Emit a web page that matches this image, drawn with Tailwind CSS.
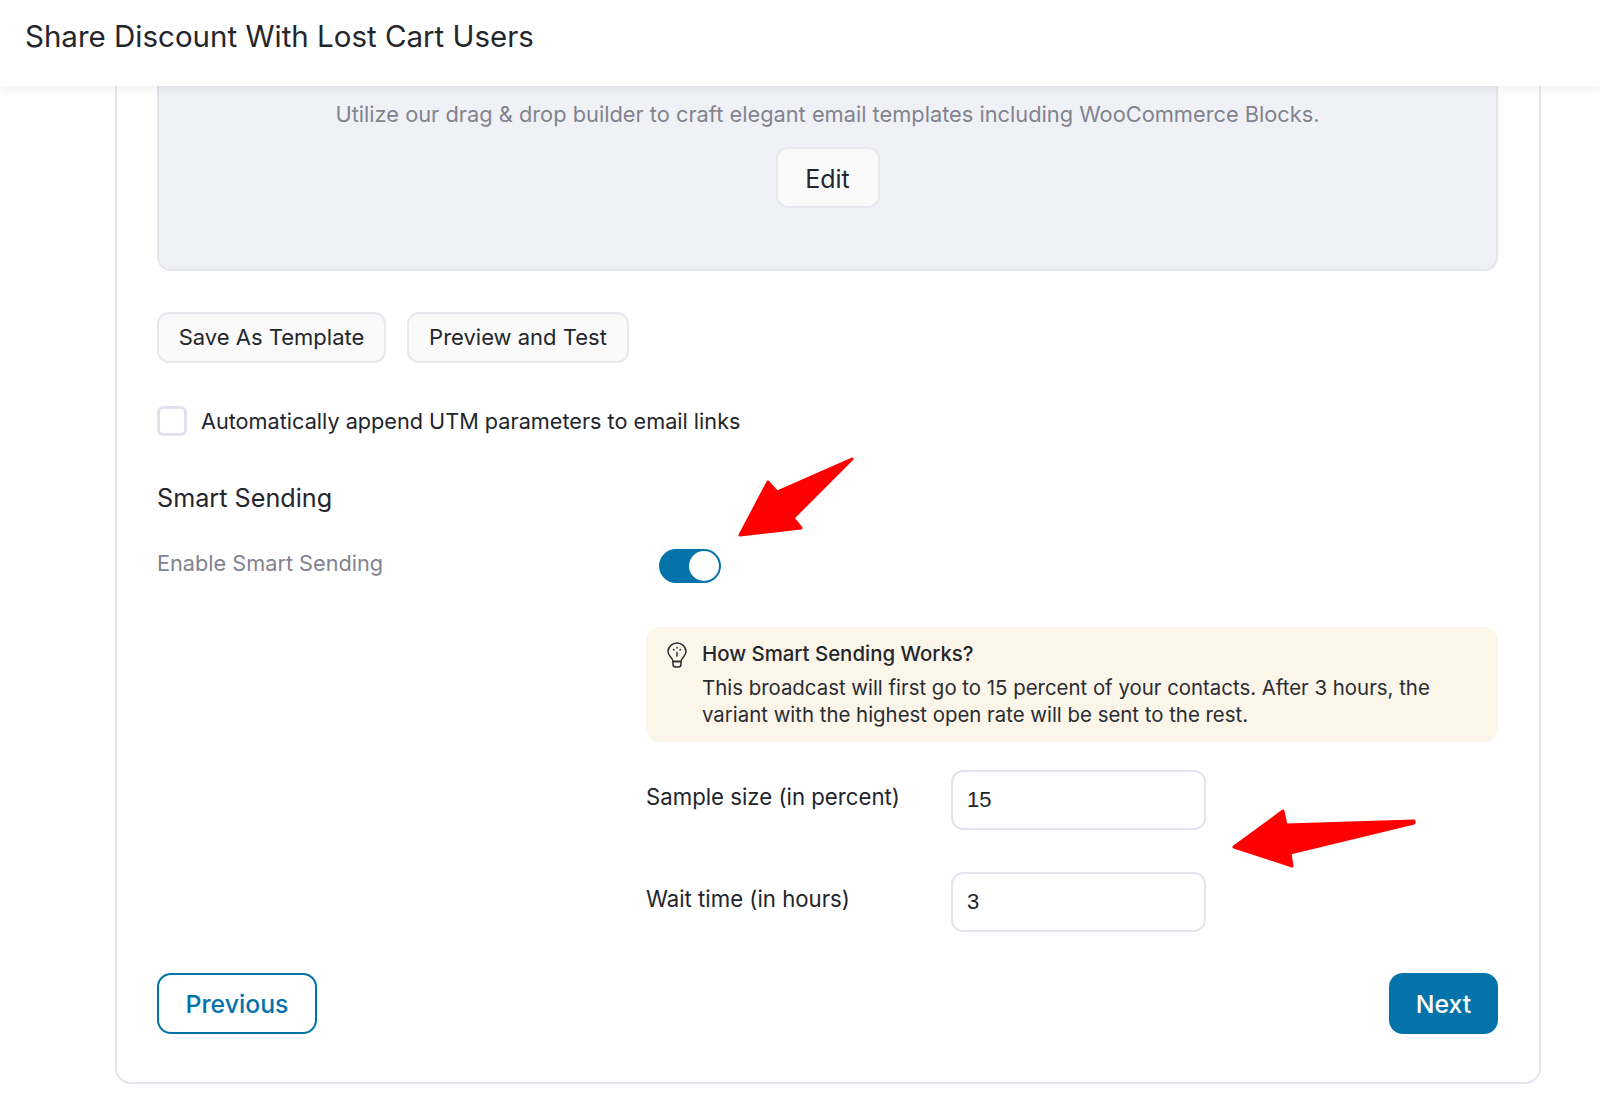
<!DOCTYPE html>
<html lang="en">
<head>
  <meta charset="UTF-8" />
  <title>Share Discount With Lost Cart Users</title>
  <script src="https://cdn.jsdelivr.net/npm/@tailwindcss/browser@4"></script>
</head>
<body class="bg-white font-['Inter',sans-serif] text-[#22252b]">
  <div class="relative h-[1109px] w-[1600px] overflow-hidden">

    <!-- header -->
    <div class="relative z-10 flex h-[86px] items-center bg-white pb-[15px] pl-[25px] shadow-[0_2px_10px_rgba(60,60,90,0.10)]">
      <h1 class="text-[29.5px] leading-[36px] font-normal text-[#24262b]">Share Discount With Lost Cart Users</h1>
    </div>

    <!-- card -->
    <div class="ml-[115px] w-[1426px] rounded-b-[16px] border-x-2 border-b-2 border-[#e4e4ef] pr-[41px] pb-[48px] pl-[40px]">

      <!-- email template box -->
      <div class="flex h-[185px] flex-col items-center rounded-b-[14px] border-x-2 border-b-2 border-[#e3e4ee] bg-[#f0f1f6] pt-[14px]">
        <p class="text-[21.8px] leading-[28px] text-[#82838f]">Utilize our drag &amp; drop builder to craft elegant email templates including WooCommerce Blocks.</p>
        <button class="mt-[19px] h-[61px] w-[104px] rounded-[12px] border-2 border-[#e8e8ef] bg-[#fafafa] pt-[4px] text-[25px] text-[#24262b]">Edit</button>
      </div>

      <div class="mt-[41px] flex gap-[21px]">
        <button class="h-[51px] w-[229px] rounded-[12px] border-2 border-[#e8e8ef] bg-[#fafafa] text-[22px] text-[#24262b]">Save As Template</button>
        <button class="h-[51px] w-[222px] rounded-[12px] border-2 border-[#e8e8ef] bg-[#fafafa] text-[22px] text-[#24262b]">Preview and Test</button>
      </div>

      <label class="mt-[43px] flex h-[30px] items-center gap-[14px]">
        <span class="h-[30px] w-[30px] rounded-[6px] border-[3px] border-[#e2e2ee] bg-white"></span>
        <span class="text-[21.67px] leading-[30px]">Automatically append UTM parameters to email links</span>
      </label>

      <h2 class="mt-[47px] text-[25.2px] leading-[30px] font-normal text-[#24262b]">Smart Sending</h2>

      <div class="mt-[36px] grid grid-cols-[489px_852px]">
        <div class="text-[21.7px] leading-[28px] text-[#82838f]">Enable Smart Sending</div>
        <div>
          <div class="ml-[13px] flex h-[34px] w-[62px] items-center justify-end rounded-full bg-[#0473aa] pr-[2px]">
            <span class="h-[30px] w-[30px] rounded-full bg-white"></span>
          </div>

          <div class="mt-[44px] flex h-[115px] gap-[14px] rounded-[14px] bg-[#fbf5ea] pt-[13px] pl-[20px]">
            <svg class="mt-[2px] h-[26px] w-[22px] shrink-0" viewBox="0 0 22 26" fill="none" stroke="#2a2c31" stroke-width="1.5" stroke-linecap="round" stroke-linejoin="round">
              <path d="M7 19.5c0-2.2-1-3-2.8-5A8.6 8.6 0 0 1 2 9.2 9 9 0 0 1 11 1a9 9 0 0 1 9 8.2c0 2-.8 3.700-2.200 5.300-1.800 2-2.800 2.800-2.800 5z" />
              <path d="M7 19.500h8v2.700a2.800 2.800 0 0 1-2.800 2.800H9.800A2.800 2.800 0 0 1 7 22.200z" />
              <path d="M11 10.500v3.500M7.500 7.500l.5.500M14.500 7.500l-.5.500M11 5.500v.5" />
            </svg>
            <div>
              <div class="text-[20.4px] leading-[28px] font-medium text-[#24262b]">How Smart Sending Works?</div>
              <p class="mt-[7px] text-[20.4px] leading-[26.5px] text-[#2a2c31]">This broadcast will first go to 15 percent of your contacts. After 3 hours, the<br />variant with the highest open rate will be sent to the rest.</p>
            </div>
          </div>

          <div class="mt-[28px] flex items-start">
            <label class="w-[305px] pt-[12px] text-[22.2px] leading-[30px]">Sample size (in percent)</label>
            <input value="15" class="h-[60px] w-[255px] rounded-[12px] border-2 border-[#e4e4ef] bg-white px-[14px] font-['Liberation_Sans',sans-serif] text-[22px] text-[#24262b]" />
          </div>
          <div class="mt-[42px] flex items-start">
            <label class="w-[305px] pt-[12px] text-[22.2px] leading-[30px]">Wait time (in hours)</label>
            <input value="3" class="h-[60px] w-[255px] rounded-[12px] border-2 border-[#e4e4ef] bg-white px-[14px] font-['Liberation_Sans',sans-serif] text-[22px] text-[#24262b]" />
          </div>
        </div>
      </div>

      <div class="mt-[41px] flex items-center justify-between">
        <button class="h-[61px] w-[160px] rounded-[14px] border-2 border-[#0473aa] bg-white pt-[2px] text-[24.8px] font-medium text-[#0473aa]">Previous</button>
        <button class="h-[61px] w-[109px] rounded-[14px] bg-[#0473aa] pt-[2px] text-[24.8px] font-medium text-white">Next</button>
      </div>
    </div>

    <!-- annotation arrows -->
    <svg class="absolute top-0 left-0 z-20" width="1600" height="1109" viewBox="0 0 1600 1109" fill="#ff0000" stroke="#ff0000" stroke-width="3" stroke-linejoin="round">
      <path d="M740 535 L768 482 L777 492 L852 459 L793 518 L801 528 Z" />
      <path d="M1234 847 L1283 811 L1286 825 L1414 821 L1414 823 L1290 853 L1292 866 Z" />
    </svg>
  </div>
</body>
</html>
